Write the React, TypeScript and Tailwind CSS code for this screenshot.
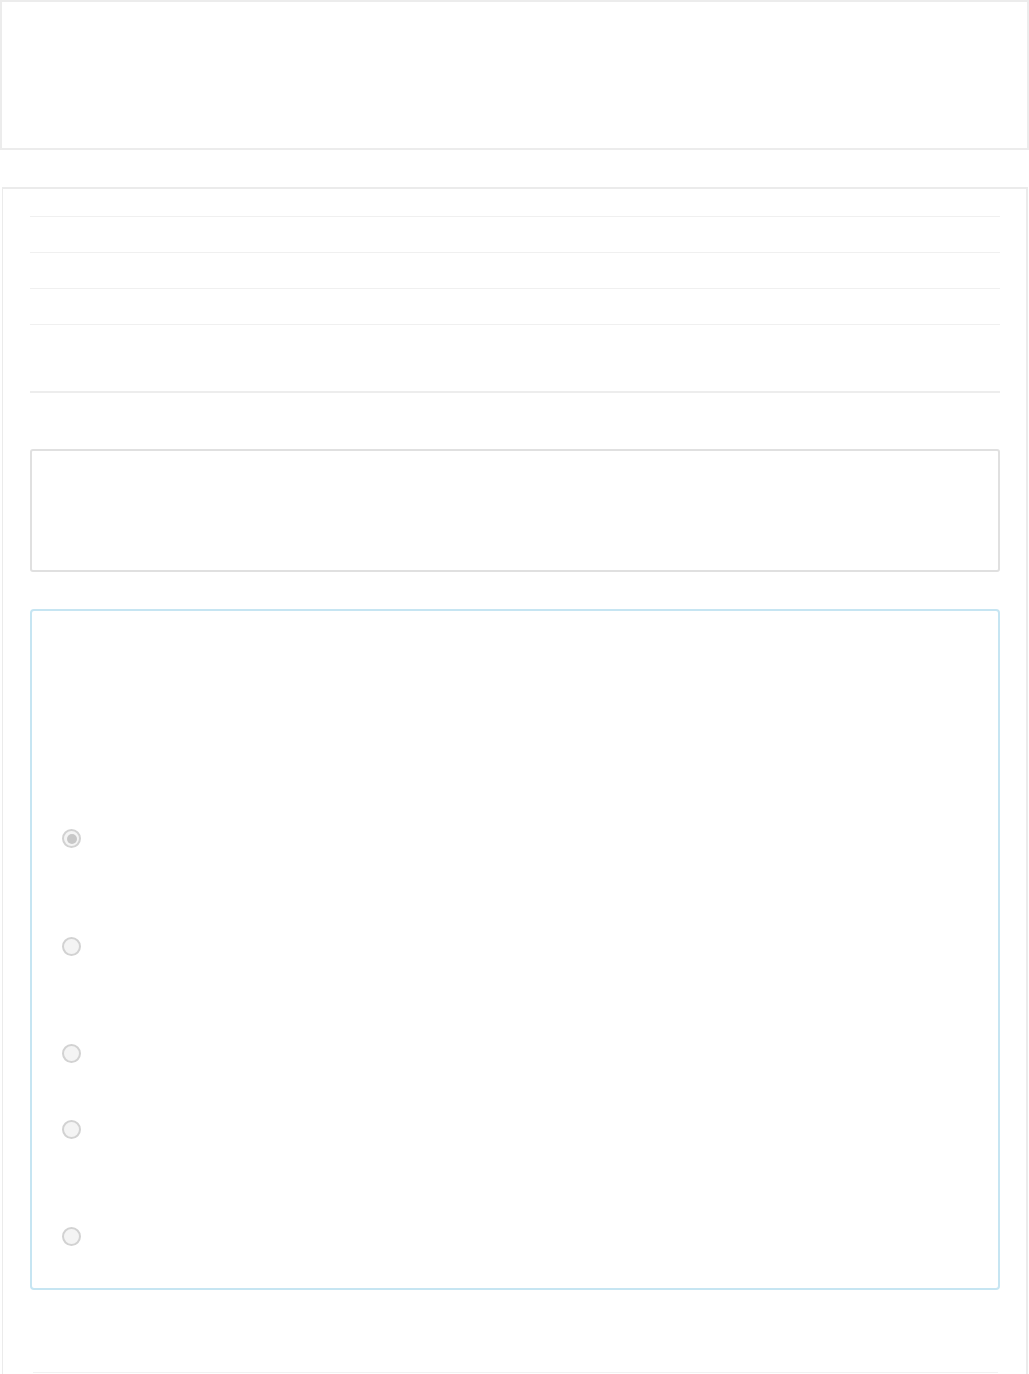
function Radio({ checked }: { checked?: boolean }) {
  return (
    <div className="w-[19px] h-[19px] rounded-full border-2 border-[#d2d2d2] bg-[#f4f4f4] flex items-center justify-center">
      {checked && <div className="w-[10px] h-[10px] rounded-full bg-[#c8c8c8]" />}
    </div>
  );
}

export default function App() {
  const radioRows = [
    { h: 'h-[108px]', checked: true },
    { h: 'h-[107px]', checked: false },
    { h: 'h-[76px]', checked: false },
    { h: 'h-[107px]', checked: false },
    { h: 'h-[62px]', checked: false },
  ];

  return (
    <div className="bg-white min-h-[1374px] font-['Liberation_Sans',sans-serif] overflow-hidden">
      {/* Header panel */}
      <div className="h-[150px] w-full border-2 border-[#ececec]" />

      {/* Main panel */}
      <div className="mt-[37px] ml-[2px] mr-[1px] border-l border-t-2 border-r-2 border-[#ebebeb] pt-[27px] pl-[27px] pr-[26px] pb-10">
        {/* Table rows */}
        <div>
          <div className="h-[36px] border-t border-[#f0f0f0]" />
          <div className="h-[36px] border-t border-[#f0f0f0]" />
          <div className="h-[36px] border-t border-[#f0f0f0]" />
          <div className="h-[67px] border-t border-[#f0f0f0]" />
          <div className="border-t-2 border-[#ededed]" />
        </div>

        {/* Well */}
        <div className="mt-[56px] h-[123px] rounded-[3px] border-2 border-[#e0e0e0]" />

        {/* Info panel */}
        <div className="mt-[37px] h-[681px] rounded-[4px] border-2 border-[#c6e5f2] pt-[218px] pl-[30px]">
          {radioRows.map((r, i) => (
            <div key={i} className={r.h}>
              <Radio checked={r.checked} />
            </div>
          ))}
        </div>

        <div className="mt-[82px] ml-[3px] mr-[2px] border-t border-[#f2f2f2]" />
      </div>
    </div>
  );
}
